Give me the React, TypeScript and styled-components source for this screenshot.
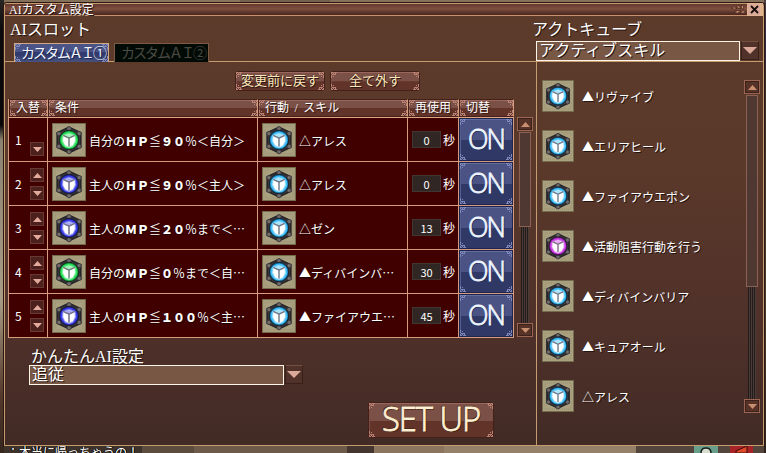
import React from 'react';
import styled, { createGlobalStyle, css } from 'styled-components';

const Global = createGlobalStyle`
  * { box-sizing: border-box; }
  body { margin: 0; overflow: hidden; background: #85705a; }
`;

const font = css`
  font-family: 'Liberation Serif', 'Noto Sans CJK JP', sans-serif;
  color: #fff;
  white-space: pre;
`;

const Scene = styled.div`
  ${font}
  width: 766px;
  height: 453px;
  overflow: hidden;
  padding: 3px 2px 0 4px;
  background:
    linear-gradient(90deg, transparent 0 120px, #8a765f 120px 240px, #74604e 240px 330px, transparent 330px) 0 0 / 766px 3px no-repeat,
    linear-gradient(180deg, #2a2624 0, #0b0a0c 30px, #08080a 125px, #8d8270 140px, #a89c86 300px, #55392c 395px, #35261e 453px) 0 0 / 4px 453px no-repeat,
    linear-gradient(180deg, #4b3b3c 0, #2c2946 40px, #3b2c28 80px, #4d3c2c 300px, #30221c 453px) 764px 0 / 2px 453px no-repeat,
    #85705a;
`;

const Window = styled.main`
  width: 760px;
  height: 443px;
  display: flex;
  flex-direction: column;
  border: 1px solid #c59c70;
  border-radius: 3px 3px 0 0;
  box-shadow: 0 0 0 1px #2c1712;
  background: linear-gradient(180deg, #5d3b2b 0, #5b392a 35%, #51322a 68%, #422b25 100%);
`;

const TitleBar = styled.header`
  height: 12px;
  display: flex;
  align-items: center;
  justify-content: space-between;
  padding-left: 4px;
  border-bottom: 1px solid #c9936f;
  background: linear-gradient(180deg, #64382d, #80503f 45%, #633a2e 70%, #4a271f);
`;

const Title = styled.h1`
  margin: 0;
  font-size: 12px;
  line-height: 12px;
  font-weight: 400;
  text-shadow: 1px 1px 0 #2a1510;
`;

const TitleTools = styled.div`
  display: flex;
  align-items: center;
  height: 12px;
  gap: 1px;
`;

const CloseButton = styled.button`
  width: 16px;
  height: 13px;
  padding: 0;
  display: grid;
  place-items: center;
  border: 1px solid #e0b48e;
  border-right-width: 3px;
  background: #dba999;
`;

const Top = styled.div`
  height: 46px;
  display: flex;
  border-bottom: 1px solid #c59c70;
`;

const TopLeft = styled.div`
  width: 531px;
  padding-left: 5px;
`;

const TopRight = styled.div`
  flex: 1;
`;

const Heading = styled.h2<{ $shift?: number; $h?: number }>`
  margin: 0 0 0 ${(p) => p.$shift ?? 0}px;
  height: ${(p) => p.$h ?? 25}px;
  font-size: 16px;
  line-height: ${(p) => (p.$h ?? 26) + 1}px;
  font-weight: 400;
  text-shadow: 1px 1px 0 #24130e;
`;

const Tabs = styled.nav`
  display: flex;
  gap: 5px;
  padding: 2px 0 0 4px;
`;

const Tab = styled.button<{ $active?: boolean }>`
  ${font}
  position: relative;
  width: 95px;
  height: 19px;
  padding: 0 0 0 6px;
  text-align: left;
  font-size: 14px;
  line-height: 17px;
  letter-spacing: -2px;
  border: 1px solid ${(p) => (p.$active ? '#d1a985' : '#7d5a43')};
  border-bottom: 0;
  color: ${(p) => (p.$active ? '#f4f7ff' : '#4a4b43')};
  background: ${(p) => (p.$active ? 'linear-gradient(180deg, #4b5486 0 45%, #323b6d 46% 60%, #47527f 100%)' : '#020a06')};
  text-shadow: ${(p) => (p.$active ? '1px 1px 0 #1d2550' : 'none')};
`;

const Dropdown = styled.div<{ $w: number }>`
  display: grid;
  grid-template-columns: ${(p) => p.$w}px 18px;
  gap: 1px;
  height: 20px;
`;

const DropValue = styled.div`
  border: 1px solid #fff4e8;
  padding-left: 2px;
  background: #785745;
  font-size: 16px;
  line-height: 18px;
  font-weight: 400;
  text-shadow: 1px 1px 0 #24130e;
`;

const DropArrow = styled.button`
  padding: 0;
  height: 19px;
  display: grid;
  place-items: center;
  border: 1px solid #382019;
  border-top-color: #73503f;
  background: #50322a;
`;

const Main = styled.div`
  flex: 1;
  display: flex;
  min-height: 0;
`;

const LeftPane = styled.section`
  width: 531px;
  padding: 9px 0 0 3px;
`;

const RightPane = styled.section`
  flex: 1;
  display: flex;
  justify-content: space-between;
  border-left: 1px solid #c59c70;
  padding: 18px 3px 0 5px;
`;

const Actions = styled.div`
  display: flex;
  gap: 5px;
  padding-left: 227px;
`;

const plate = css`
  position: relative;
  border: 1px solid #432019;
  background: linear-gradient(180deg, #7b5046 0 52%, #613329 53% 100%);
  box-shadow: inset 0 1px 0 #99675b, inset 1px 0 0 #7d4e43;
`;

const ActionButton = styled.button`
  ${font}
  ${plate}
  width: 90px;
  height: 20px;
  padding: 0;
  border-radius: 3px;
  font-size: 13px;
  line-height: 18px;
  color: #fbe7be;
  text-shadow: 1px 1px 0 #2e1711, -1px 0 0 #4a281f;
`;

const TableArea = styled.div`
  display: flex;
  gap: 3px;
  margin-top: 8px;
`;

const cols = '39px 210px 150px 51px 55px';

const Table = styled.div`
  width: 506px;
  border-left: 1px solid #d69a7c;
`;

const HeadRow = styled.div`
  display: grid;
  grid-template-columns: ${cols};
  height: 19px;
  border-bottom: 1px solid #e0a585;
`;

const HeadCell = styled.div`
  ${plate}
  height: 18px;
  padding-left: 6px;
  font-size: 12px;
  line-height: 17px;
  word-spacing: 2.5px;
  border-right: 1px solid #d69a7c;
  text-shadow: 1px 1px 0 #361c16;
`;

const Row = styled.div`
  display: grid;
  grid-template-columns: ${cols};
  height: 44px;
  border-bottom: 1px solid #d69a7c;
  background: #400000;
`;

const Cell = styled.div<{ $pad?: number }>`
  display: flex;
  align-items: center;
  min-width: 0;
  padding-left: ${(p) => p.$pad ?? 0}px;
  border-right: 1px solid #d69a7c;
`;

const RowNumber = styled.span`
  width: 15px;
  font: 12px 'Noto Sans CJK JP', sans-serif;
  line-height: 14px;
`;

const Movers = styled.div`
  height: 43px;
  display: flex;
  flex-direction: column;
  justify-content: flex-end;
  gap: 4px;
  padding-bottom: 5px;
`;

const MoveButton = styled.button`
  width: 14px;
  height: 14px;
  padding: 0;
  display: grid;
  place-items: center;
  border: 1px solid #6a3733;
  background: #4c211d;
`;

const CellText = styled.span`
  margin-left: 3px;
  font-family: 'Noto Sans CJK JP', sans-serif;
  font-size: 12px;
  line-height: 14px;
  padding-top: 3px;
  text-shadow: 1px 1px 0 #1d0000;
`;

const Strong = styled.b`
  font-weight: 900;
`;

const Seconds = styled.span`
  width: 29px;
  height: 17px;
  border: 1px solid #433632;
  background: #302725;
  font: 11px/16px 'Noto Sans CJK JP', sans-serif;
  text-align: center;
`;

const Unit = styled.span`
  margin-left: 2px;
  padding-top: 2px;
  font-size: 12px;
  line-height: 16px;
`;

const Toggle = styled.button`
  position: relative;
  width: 54px;
  height: 43px;
  padding: 0;
  border: 1px solid #1c2450;
  background: linear-gradient(180deg, #4b5385 0 50%, #303966 51% 100%);
  box-shadow: inset 0 1px 0 #646da0, inset 1px 0 0 #545d90;
`;

const ToggleLabel = styled.span`
  display: block;
  height: 41px;
  font: 300 28px/39px 'Open Sans', sans-serif;
  color: #eef6ff;
  letter-spacing: -2px;
  transform: scaleX(0.96);
  -webkit-text-stroke: 0.8px #eef6ff;
  text-shadow: 1px 1px 0 #1c2450;
`;

const Scroll = styled.div<{ $h: number }>`
  width: 16px;
  height: ${(p) => p.$h}px;
  display: flex;
  flex-direction: column;
  align-items: center;
`;

const ScrollButton = styled.button`
  width: 16px;
  height: 14px;
  padding: 0;
  display: grid;
  place-items: center;
  border: 1px solid #9b6552;
  outline: 1px solid #3a211b;
  outline-offset: -2px;
  background: #573226;
`;

const Thumb = styled.div<{ $h: number }>`
  width: 12px;
  height: ${(p) => p.$h}px;
  margin-top: 1px;
  border: 1px solid #8c6053;
  background: #4f3831;
`;

const Track = styled.div`
  flex: 1;
  width: 8px;
  background: repeating-linear-gradient(90deg, #211c1b 0 1px, #4b3c37 1px 2px);
`;

const ScrollWrap = styled.div`
  padding-top: 18px;
`;

const Easy = styled.div`
  padding: 9px 0 0 21px;
`;

const SetupButton = styled.button`
  ${plate}
  display: block;
  width: 126px;
  height: 36px;
  margin: 17px 0 0 360px;
  padding: 0;
  border-radius: 3px;
`;

const SetupLabel = styled.span`
  display: block;
  height: 34px;
  font: 300 33px/31px 'Open Sans', sans-serif;
  letter-spacing: -1px;
  color: #fff0d2;
  white-space: nowrap;
  transform: scaleX(0.99);
  -webkit-text-stroke: 0.8px #fff0d2;
  text-shadow: 1px 1px 0 #3a1c14, -1px -1px 0 #3a1c14;
`;

const CubeList = styled.ul`
  list-style: none;
  margin: 0;
  padding: 0;
  display: grid;
  grid-auto-rows: 32px;
  row-gap: 18px;
`;

const CubeItem = styled.li`
  display: flex;
  align-items: center;
  gap: 8px;
`;

const CubeName = styled.span`
  padding-top: 2px;
  font-family: 'Noto Sans CJK JP', sans-serif;
  font-size: 12px;
  line-height: 16px;
  text-shadow: 1px 1px 0 #24130e;
`;

const BottomStrip = styled.footer`
  width: 760px;
  height: 7px;
  display: flex;
  overflow: hidden;
  padding-left: 3px;
  background: linear-gradient(90deg, #3e332b 0 138px, #5c4c3e 138px 190px, #6d5a48 190px 343px, #45352f 343px 370px, #8b755e 370px 440px, #95806a 440px 632px, #54453c 632px);
`;

const ChatLine = styled.span`
  width: 687px;
  font-size: 12px;
  line-height: 14px;
  text-shadow: 1px 0 0 #000, -1px 0 0 #000;
`;

const CornerSvg = styled.svg<{ $x: number; $y: number }>`
  position: absolute;
  ${(p) => (p.$x ? 'right: 0;' : 'left: 0;')}
  ${(p) => (p.$y ? 'bottom: 0;' : 'top: 0;')}
  transform: scale(${(p) => (p.$x ? -1 : 1)}, ${(p) => (p.$y ? -1 : 1)});
`;

function Corners({ color = '#b98273' }: { color?: string }) {
  return (
    <>
      {[[0, 0], [1, 0], [0, 1], [1, 1]].map(([x, y]) => (
        <CornerSvg key={`${x}${y}`} $x={x} $y={y} width="6" height="6" viewBox="0 0 6 6" shapeRendering="crispEdges">
          <path d="M0 .5H2M3 .5H6M.5 0V2M.5 3V6M2.5 1V3M1 2.5H4M4.5 1V3M2 4.5H3" stroke={color} fill="none" />
        </CornerSvg>
      ))}
    </>
  );
}

function Arrow({ up, w = 9, color = '#e3aa9c' }: { up?: boolean; w?: number; color?: string }) {
  const h = Math.ceil(w / 2);
  return (
    <svg width={w} height={h} viewBox={`0 0 ${w} ${h}`} display="block">
      <path d={up ? `M0 ${h}L${w / 2} 0L${w} ${h}Z` : `M0 0H${w}L${w / 2} ${h}Z`} fill={color} />
    </svg>
  );
}

const glow: Record<string, [string, string]> = {
  green: ['#2be35c', '#0d8a31'],
  blue: ['#3b40ea', '#1b1e8e'],
  cyan: ['#41c0f8', '#0f6596'],
  purple: ['#cc3ae6', '#731488'],
};

function Cube({ tone, size }: { tone: string; size: number }) {
  const [light, dark] = glow[tone];
  const studs = [[16, 5.5], [25.5, 10], [25.5, 22], [16, 27], [6.5, 22], [6.5, 10]];
  return (
    <svg width={size} height={size} viewBox="0 0 32 32" display="block">
      <rect x=".5" y=".5" width="31" height="31" fill="#aaa180" stroke="#756c50" />
      <path d="M3 3H29V29H3Z" fill="none" stroke="#988e6e" strokeDasharray="1 1" />
      <path d="M16 4L27 9.2V22.8L16 28L5 22.8V9.2Z" fill="#454143" stroke="#282527" strokeWidth="1.8" strokeLinejoin="round" />
      {studs.map(([x, y]) => (
        <circle key={`${x}-${y}`} cx={x} cy={y} r="2" fill="#726d6d" stroke="#343133" strokeWidth=".7" />
      ))}
      <circle cx="16" cy="16" r="9.2" fill={dark} stroke="#1b1b20" strokeWidth=".8" />
      <circle cx="16" cy="16" r="8.1" fill={light} />
      <path d="M10.5 12L16 10L21.5 12L22 17L19.5 21.5L16 23L12.5 21.5L10 17Z" fill="#fff" fillOpacity=".55" stroke="#fff" strokeOpacity=".35" strokeWidth="1.5" />
      <path d="M10.8 12.8L15.4 14.8V22.2L12.4 20.6L10.6 17ZM21.2 12.8L16.6 14.8V22.2L19.6 20.6L21.4 17Z" fill="#fff" />
      <path d="M10.6 11.6L16 14.2L21.4 11.6M16 14.2V22" fill="none" stroke="#77727c" strokeWidth="1.2" />
    </svg>
  );
}

function ScrollBar({ height, thumb }: { height: number; thumb: number }) {
  return (
    <Scroll $h={height}>
      <ScrollButton aria-label="up"><Arrow up color="#c88f70" /></ScrollButton>
      <Thumb $h={thumb} />
      <Track />
      <ScrollButton aria-label="down"><Arrow color="#c88f70" /></ScrollButton>
    </Scroll>
  );
}

const rows = [
  { tone: 'green', cond: ['自分の', 'ＨＰ', '≦', '９０', '％＜自分＞'], act: '△アレス', sec: 0 },
  { tone: 'blue', cond: ['主人の', 'ＨＰ', '≦', '９０', '％＜主人＞'], act: '△アレス', sec: 0 },
  { tone: 'blue', cond: ['主人の', 'ＭＰ', '≦', '２０', '％まで＜…'], act: '△ゼン', sec: 13 },
  { tone: 'green', cond: ['自分の', 'ＭＰ', '≦', '０', '％まで＜自…'], act: '▲ディバインバ…', sec: 30 },
  { tone: 'blue', cond: ['主人の', 'ＨＰ', '≦', '１００', '％＜主…'], act: '▲ファイアウエ…', sec: 45 },
];

const cubes = [
  ['cyan', '▲リヴァイブ'],
  ['cyan', '▲エリアヒール'],
  ['cyan', '▲ファイアウエポン'],
  ['purple', '▲活動阻害行動を行う'],
  ['cyan', '▲ディバインバリア'],
  ['cyan', '▲キュアオール'],
  ['cyan', '△アレス'],
];

export default function App() {
  return (
    <Scene lang="ja">
      <Global />
      <Window>
        <TitleBar>
          <Title>AIカスタム設定</Title>
          <TitleTools>
            <svg width="15" height="11" viewBox="0 0 15 11">
              <path d="M0 4Q3 1.5 6 4.5Q3 6 0 4ZM5 2Q8 .5 10 4.5Q6.500 5 5 2ZM3 8.500Q6 5.500 10 7Q7 10.500 3 8.500ZM10.500 .5Q14 2 12 5.500Q9.500 4 10.500 .5ZM9.500 9Q11 5.500 14.500 7Q13 10.500 9.500 9Z" fill="#cf947a" stroke="#35190f" strokeWidth=".7" />
            </svg>
            <CloseButton aria-label="close">
              <svg width="9" height="9" viewBox="0 0 9 9"><path d="M1 1L8 8M8 1L1 8" stroke="#160b0b" strokeWidth="1.8" /></svg>
            </CloseButton>
          </TitleTools>
        </TitleBar>
        <Top>
          <TopLeft>
            <Heading>AIスロット</Heading>
            <Tabs>
              <Tab $active>カスタムＡＩ①<Corners color="#7f88bb" /></Tab>
              <Tab>カスタムＡＩ②</Tab>
            </Tabs>
          </TopLeft>
          <TopRight>
            <Heading $shift={-4}>アクトキューブ</Heading>
            <Dropdown $w={204}>
              <DropValue>アクティブスキル</DropValue>
              <DropArrow aria-label="open"><Arrow w={14} color="#dba99a" /></DropArrow>
            </Dropdown>
          </TopRight>
        </Top>
        <Main>
          <LeftPane>
            <Actions>
              <ActionButton>変更前に戻す<Corners /></ActionButton>
              <ActionButton>全て外す<Corners /></ActionButton>
            </Actions>
            <TableArea>
              <Table>
                <HeadRow>
                  {['入替', '条件', '行動 / スキル', '再使用', '切替'].map((h) => (
                    <HeadCell key={h}>{h}<Corners /></HeadCell>
                  ))}
                </HeadRow>
                {rows.map((r, i) => (
                  <Row key={i}>
                    <Cell $pad={6}>
                      <RowNumber>{i + 1}</RowNumber>
                      <Movers>
                        {i > 0 && <MoveButton aria-label="up"><Arrow up /></MoveButton>}
                        <MoveButton aria-label="down"><Arrow /></MoveButton>
                      </Movers>
                    </Cell>
                    <Cell $pad={4}>
                      <Cube tone={r.tone} size={34} />
                      <CellText>
                        {r.cond.map((part, j) => (j % 2 ? <Strong key={j}>{part}</Strong> : part))}
                      </CellText>
                    </Cell>
                    <Cell $pad={4}>
                      <Cube tone="cyan" size={34} />
                      <CellText>{r.act}</CellText>
                    </Cell>
                    <Cell $pad={4}>
                      <Seconds>{r.sec}</Seconds>
                      <Unit>秒</Unit>
                    </Cell>
                    <Cell>
                      <Toggle><ToggleLabel>ON</ToggleLabel><Corners color="#7f88bb" /></Toggle>
                    </Cell>
                  </Row>
                ))}
              </Table>
              <ScrollWrap><ScrollBar height={220} thumb={95} /></ScrollWrap>
            </TableArea>
            <Easy>
              <Heading $shift={2} $h={18}>かんたんAI設定</Heading>
              <Dropdown $w={255}>
                <DropValue>追従</DropValue>
                <DropArrow aria-label="open"><Arrow w={14} color="#dba99a" /></DropArrow>
              </Dropdown>
            </Easy>
            <SetupButton><SetupLabel>SET UP</SetupLabel><Corners /></SetupButton>
          </LeftPane>
          <RightPane>
            <CubeList>
              {cubes.map(([tone, name]) => (
                <CubeItem key={name}><Cube tone={tone} size={32} /><CubeName>{name}</CubeName></CubeItem>
              ))}
            </CubeList>
            <ScrollBar height={333} thumb={192} />
          </RightPane>
        </Main>
      </Window>
      <BottomStrip>
        <ChatLine>：本当に帰っちゃうの！</ChatLine>
        <svg width="60" height="7" viewBox="0 0 60 7">
          <path d="M0 0H24V7H0Z" fill="#679f8a" />
          <path d="M7 7Q7 2 12 2Q17 2 17 7" fill="#d7ded0" stroke="#17201a" strokeWidth="1.5" />
          <path d="M36 0H59V7H36Z" fill="#a82326" />
          <path d="M42 5L53 0V7H42Z" fill="#df4a2a" stroke="#3b0b09" />
        </svg>
      </BottomStrip>
    </Scene>
  );
}
